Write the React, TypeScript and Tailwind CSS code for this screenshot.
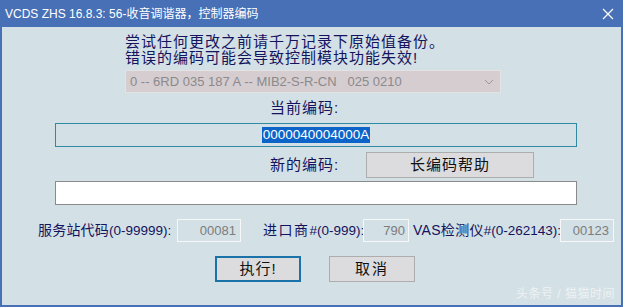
import React from "react";

const cjk = { fontFamily: '"Liberation Sans", "Noto Sans CJK SC", sans-serif' };

export default function App() {
  return (
    <div className="w-[623px] h-[307px] flex flex-col bg-[#4770b6] overflow-hidden" style={cjk}>
      <div className="h-[27px] flex items-center justify-between pl-[5px] pr-[8px] text-white text-[12px] shrink-0">
        <span>VCDS ZHS 16.8.3: 56-收音调谐器，控制器编码</span>
        <svg width="12" height="12" viewBox="0 0 12 12" className="mr-[1px]">
          <path d="M1 1 L11 11 M11 1 L1 11" stroke="#ffffff" strokeWidth="1.2" />
        </svg>
      </div>
      <div className="flex-1 mx-[2px] mb-[2px] bg-[#d3e0e5] flex flex-col text-[#13135e] relative">
        <div className="ml-[123px] mt-[7px] text-[15px] leading-[16px] tracking-[1px]">
          <div>尝试任何更改之前请千万记录下原始值备份。</div>
          <div>错误的编码可能会导致控制模块功能失效!</div>
        </div>
        <div className="ml-[123px] mt-[4px] w-[376px] h-[23px] bg-[#d6cdd1] border border-[#e3e3e3] flex items-center justify-between pl-[4px] pr-[6px] text-[#8a8a8a] text-[13px]">
          <span className="whitespace-pre">0 -- 6RD 035 187 A -- MIB2-S-R-CN   025 0210</span>
          <svg width="10" height="6" viewBox="0 0 10 6">
            <path d="M1 1 L5 5 L9 1" stroke="#9a9a9a" strokeWidth="1" fill="none" />
          </svg>
        </div>
        <div className="ml-[268px] mt-[7px] text-[15px] leading-[16px] tracking-[1px]">当前编码:</div>
        <div className="ml-[53px] mt-[7px] w-[522px] h-[24px] border border-[#2f8aa3] flex items-center justify-center">
          <span className="bg-[#0c64c8] text-white text-[13.5px] leading-[16px] px-[1px]">0000040004000A</span>
        </div>
        <div className="ml-[53px] mt-[5px] w-[522px] flex items-center">
          <span className="ml-[215px] w-[80px] shrink-0 text-[15px] tracking-[1px]">新的编码:</span>
          <div className="ml-[16px] w-[168px] h-[26px] shrink-0 bg-[#dcdcdf] border border-[#adadad] flex items-center justify-center text-[15px] tracking-[1px] text-[#111]">
            长编码帮助
          </div>
        </div>
        <div className="ml-[53px] mt-[3px] w-[522px] h-[24px] bg-white border border-[#8a8a8a]"></div>
        <div className="mt-[14px] flex items-center text-[14px] whitespace-nowrap">
          <span className="ml-[36px] w-[139px] shrink-0">
            <span className="tracking-[0.2px]">服务站代码</span>
            <span className="text-[13.5px]">(0-99999):</span>
          </span>
          <div className="w-[64px] h-[23px] shrink-0 border border-[#f7f7f7] flex items-center justify-end pr-[4px] text-[#7c7c7c] text-[13px]">00081</div>
          <span className="ml-[22px] w-[100px] shrink-0">
            <span className="tracking-[1.5px]">进口商</span>
            <span className="text-[13.5px]">#(0-999):</span>
          </span>
          <div className="w-[46px] h-[23px] shrink-0 border border-[#f7f7f7] flex items-center justify-end pr-[3px] text-[#7c7c7c] text-[13px]">790</div>
          <span className="ml-[4px] w-[147px] shrink-0">
            <span className="tracking-[0.3px]">VAS检测仪</span>
            <span className="text-[13.5px]">#(0-262143):</span>
          </span>
          <div className="w-[54px] h-[23px] shrink-0 border border-[#f7f7f7] flex items-center justify-end pr-[4px] text-[#7c7c7c] text-[13px]">00123</div>
        </div>
        <div className="mt-[14px] flex">
          <div className="ml-[213px] w-[86px] h-[26px] bg-[#dcdcdf] border-2 border-[#1a73a8] flex items-center justify-center text-[15px] text-[#111] tracking-[1px]">执行!</div>
          <div className="ml-[28px] w-[86px] h-[26px] bg-[#dcdcdf] border border-[#adadad] flex items-center justify-center text-[15px] text-[#111] tracking-[2px]">取消</div>
        </div>
        <div className="absolute right-[6px] bottom-[2px] text-[12px] text-[#eef2f4] tracking-[0.5px]">头条号 / 猫猫时间</div>
      </div>
    </div>
  );
}
